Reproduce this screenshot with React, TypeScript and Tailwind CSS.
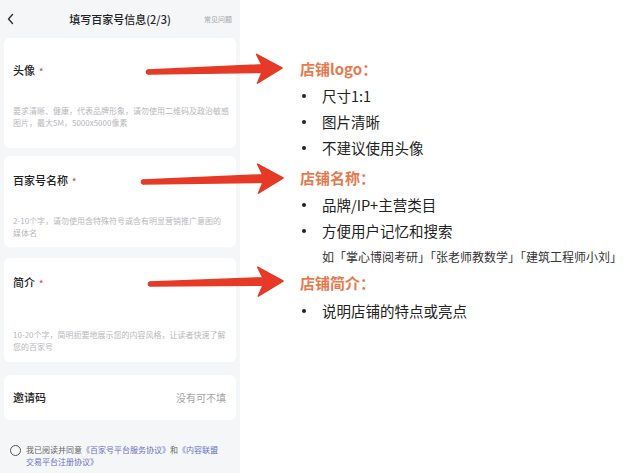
import React from "react";

const font = { fontFamily: '"Noto Sans CJK SC", "Noto Sans", sans-serif' };

function Arrow({ x1, y1, x2, y2 }: { x1: number; y1: number; x2: number; y2: number }) {
  const dx = x2 - x1;
  const dy = y2 - y1;
  const len = Math.hypot(dx, dy);
  const ux = dx / len;
  const uy = dy / len;
  const nx = -uy;
  const ny = ux;
  const headLen = 25;
  const headW = 14.5;
  const notch = 5;
  const p = (along: number, side: number) =>
    `${(x1 + ux * along + nx * side).toFixed(1)},${(y1 + uy * along + ny * side).toFixed(1)}`;
  const base = len - headLen;
  const pts = [
    p(0, -2),
    p(base + notch, -3.8),
    p(base, -headW),
    p(len, 0),
    p(base, headW),
    p(base + notch, 3.8),
    p(0, 2),
  ].join(" ");
  return (
    <g>
      <polygon points={pts} fill="#e63a26" stroke="#e63a26" strokeWidth={1.5} strokeLinejoin="round" />
      <circle cx={x1} cy={y1} r={2.4} fill="#e63a26" />
    </g>
  );
}

function Bullet({ children, h = "h-[26px]" }: { children: React.ReactNode; h?: string }) {
  return (
    <div className={`${h} flex items-center text-[14.5px] text-[#222]`}>
      <span className="w-[4px] h-[4px] rounded-full bg-[#222] ml-[2px] mr-[16px]" />
      {children}
    </div>
  );
}

export default function App() {
  return (
    <div className="relative w-[632px] h-[473px] bg-white flex overflow-hidden" style={font}>
      {/* phone panel */}
      <div className="w-[240px] h-full bg-[#f5f6f8] flex flex-col">
        <div className="h-[38px] flex items-center px-[6px] relative">
          <span className="w-[40px] flex items-center">
            <svg width="10" height="12" viewBox="0 0 10 12">
              <path d="M6.5 1.5 L2.5 6 L6.5 10.5" fill="none" stroke="#333" strokeWidth="1.4" strokeLinecap="round" strokeLinejoin="round" />
            </svg>
          </span>
          <div className="flex-1 text-center text-[11px] font-medium text-[#222] leading-none">填写百家号信息(2/3)</div>
          <span className="w-[40px] text-right text-[7px] text-[#a6a6aa] pr-[2px]">常见问题</span>
        </div>
        <div className="bg-white rounded-[6px] mx-[4px] px-[9px] pt-[27px] pb-[20px] h-[110px] flex flex-col">
          <div className="text-[11px] text-[#222] font-medium leading-none">
            头像<span className="text-[#e5484d] text-[9px] ml-[4px]">*</span>
          </div>
          <div className="flex-1" />
          <div className="text-[8px] leading-[11.5px] text-[#b8b8bc] whitespace-nowrap">
            <div>要求清晰、健康，代表品牌形象，请勿使用二维码及政治敏感</div>
            <div>图片，最大5M，5000x5000像素</div>
          </div>
        </div>
        <div className="h-[8px]" />
        <div className="bg-white rounded-[6px] mx-[4px] px-[9px] pt-[19px] pb-[9px] h-[91px] flex flex-col">
          <div className="text-[11px] text-[#222] font-medium leading-none">
            百家号名称<span className="text-[#e5484d] text-[9px] ml-[4px]">*</span>
          </div>
          <div className="flex-1" />
          <div className="text-[8px] leading-[11.5px] text-[#b8b8bc] whitespace-nowrap">
            <div>2-10个字，请勿使用含特殊符号或含有明显营销推广意图的</div>
            <div>媒体名</div>
          </div>
        </div>
        <div className="h-[11px]" />
        <div className="bg-white rounded-[6px] mx-[4px] px-[9px] pt-[19px] pb-[10px] h-[104px] flex flex-col">
          <div className="text-[11px] text-[#222] font-medium leading-none">
            简介<span className="text-[#e5484d] text-[9px] ml-[4px]">*</span>
          </div>
          <div className="flex-1" />
          <div className="text-[8px] leading-[11.5px] text-[#b8b8bc] whitespace-nowrap">
            <div>10-20个字，简明扼要地展示您的内容风格，让读者快速了解</div>
            <div>您的百家号</div>
          </div>
        </div>
        <div className="h-[13px]" />
        <div className="bg-white rounded-[6px] mx-[4px] px-[9px] h-[45px] flex items-center justify-between">
          <span className="text-[11px] text-[#222] font-medium">邀请码</span>
          <span className="text-[10px] text-[#a6a6aa] pr-[1px]">没有可不填</span>
        </div>
        <div className="flex pl-[10px] pr-[6px] pt-[24px] gap-[5px]">
          <div className="w-[11px] h-[11px] rounded-full border border-[#555] mt-[1px] shrink-0" />
          <div className="text-[8px] leading-[12px] text-[#666] whitespace-nowrap">
            我已阅读并同意<span className="text-[#6b70c6]">《百家号平台服务协议》</span>和<span className="text-[#6b70c6]">《内容联盟</span>
            <br />
            <span className="text-[#6b70c6]">交易平台注册协议》</span>
          </div>
        </div>
      </div>

      {/* notes */}
      <div className="flex-1 pl-[60px] pt-[55px] flex flex-col">
        <div className="h-[28px] flex items-center text-[15px] font-bold text-[#e8794f]">店铺logo：</div>
        <Bullet>尺寸1:1</Bullet>
        <Bullet>图片清晰</Bullet>
        <Bullet>不建议使用头像</Bullet>
        <div className="h-[28px] mt-[3px] flex items-center text-[15px] font-bold text-[#e8794f]">店铺名称：</div>
        <Bullet>品牌/IP+主营类目</Bullet>
        <Bullet>方便用户记忆和搜索</Bullet>
        <div className="h-[25px] flex items-center pl-[22px] text-[12px] text-[#333] whitespace-nowrap">
          如「掌心博阅考研」「张老师教数学」「建筑工程师小刘」
        </div>
        <div className="h-[28px] flex items-center text-[15px] font-bold text-[#e8794f]">店铺简介：</div>
        <Bullet h="h-[28px]">说明店铺的特点或亮点</Bullet>
      </div>

      <svg className="absolute inset-0 pointer-events-none" width={632} height={473} viewBox="0 0 632 473">
        <Arrow x1={148} y1={72} x2={282} y2={68} />
        <Arrow x1={143} y1={182} x2={283} y2={178} />
        <Arrow x1={150} y1={284} x2={283} y2={281} />
      </svg>
    </div>
  );
}
